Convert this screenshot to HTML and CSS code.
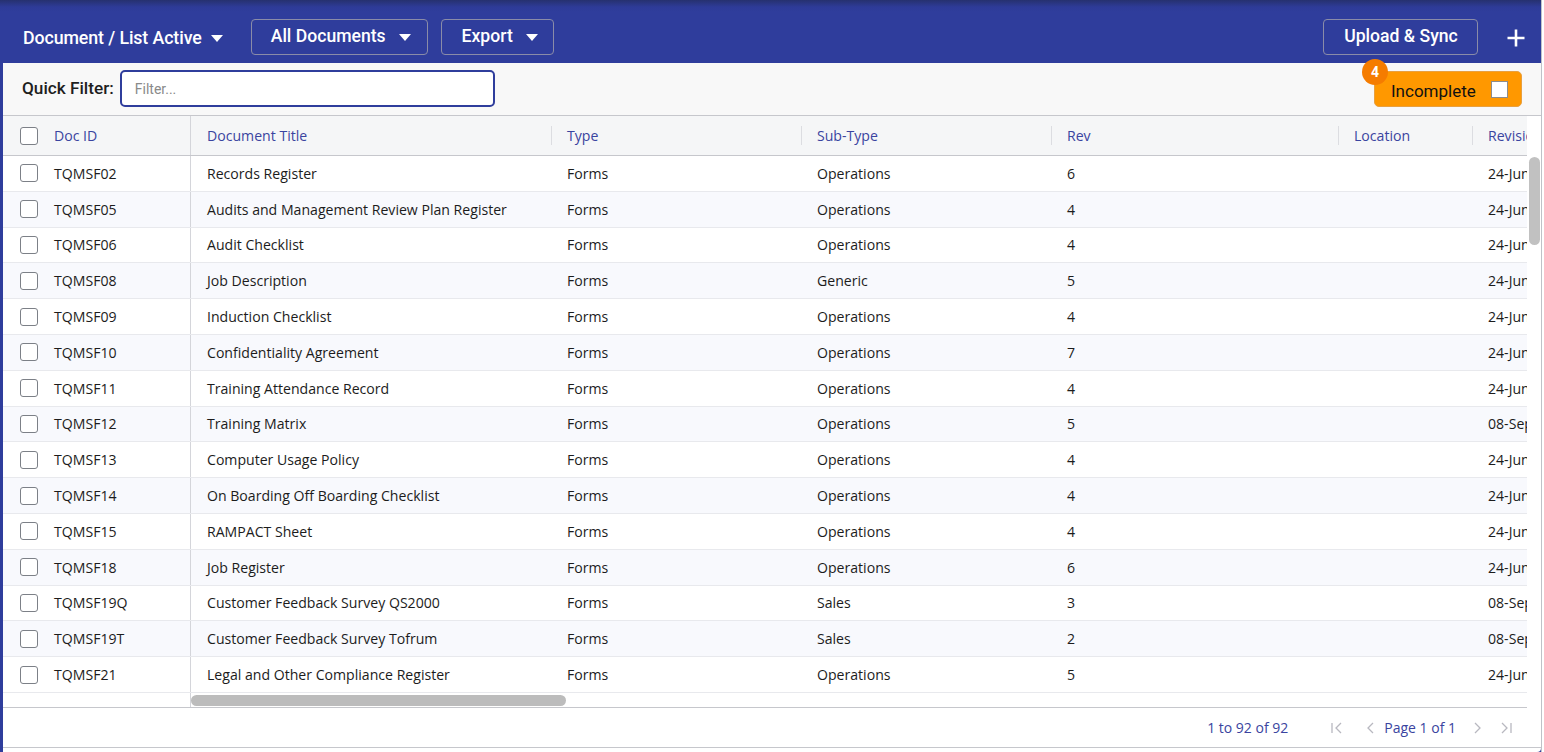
FILE: index.html
```html
<!DOCTYPE html>
<html>
<head>
<meta charset="utf-8">
<link rel="stylesheet" href="styles.css">
</head>
<body>
<div class="app">
  <header class="topbar">
    <div class="title-dd">Document / List Active <span class="caret"></span></div>
    <button class="tb-btn btn-all">All Documents <span class="caret"></span></button>
    <button class="tb-btn btn-export">Export <span class="caret"></span></button>
    <div class="spacer"></div>
    <button class="tb-btn btn-upload">Upload &amp; Sync</button>
    <svg class="plus" width="20" height="20" viewBox="0 0 20 20"><path d="M10 1.5V18.5M1.5 10H18.5" stroke="#fff" stroke-width="2.6"/></svg>
  </header>
  <main class="panel">
    <div class="filterbar">
      <label class="qf-label">Quick Filter:</label>
      <input class="qf-input" type="text" placeholder="Filter...">
      <div class="spacer"></div>
      <div class="incomplete">
        <span class="badge">4</span>
        <span>Incomplete</span>
        <span class="inc-box"></span>
      </div>
    </div>
    <div class="grid">
      <div class="grid-view">
        <div class="row head">
          <div class="cell pin"><span class="cb"></span><span>Doc ID</span></div>
          <div class="cell c-title">Document Title</div>
          <div class="cell c-type sep">Type</div>
          <div class="cell c-sub sep">Sub-Type</div>
          <div class="cell c-rev sep">Rev</div>
          <div class="cell c-loc sep">Location</div>
          <div class="cell c-date sep">Revision Date</div>
        </div>
        <div class="body">
          <div class="row"><div class="cell pin"><span class="cb"></span><span>TQMSF02</span></div><div class="cell c-title">Records Register</div><div class="cell c-type">Forms</div><div class="cell c-sub">Operations</div><div class="cell c-rev">6</div><div class="cell c-loc"></div><div class="cell c-date">24-Jun-2021</div></div>
          <div class="row alt"><div class="cell pin"><span class="cb"></span><span>TQMSF05</span></div><div class="cell c-title">Audits and Management Review Plan Register</div><div class="cell c-type">Forms</div><div class="cell c-sub">Operations</div><div class="cell c-rev">4</div><div class="cell c-loc"></div><div class="cell c-date">24-Jun-2021</div></div>
          <div class="row"><div class="cell pin"><span class="cb"></span><span>TQMSF06</span></div><div class="cell c-title">Audit Checklist</div><div class="cell c-type">Forms</div><div class="cell c-sub">Operations</div><div class="cell c-rev">4</div><div class="cell c-loc"></div><div class="cell c-date">24-Jun-2021</div></div>
          <div class="row alt"><div class="cell pin"><span class="cb"></span><span>TQMSF08</span></div><div class="cell c-title">Job Description</div><div class="cell c-type">Forms</div><div class="cell c-sub">Generic</div><div class="cell c-rev">5</div><div class="cell c-loc"></div><div class="cell c-date">24-Jun-2021</div></div>
          <div class="row"><div class="cell pin"><span class="cb"></span><span>TQMSF09</span></div><div class="cell c-title">Induction Checklist</div><div class="cell c-type">Forms</div><div class="cell c-sub">Operations</div><div class="cell c-rev">4</div><div class="cell c-loc"></div><div class="cell c-date">24-Jun-2021</div></div>
          <div class="row alt"><div class="cell pin"><span class="cb"></span><span>TQMSF10</span></div><div class="cell c-title">Confidentiality Agreement</div><div class="cell c-type">Forms</div><div class="cell c-sub">Operations</div><div class="cell c-rev">7</div><div class="cell c-loc"></div><div class="cell c-date">24-Jun-2021</div></div>
          <div class="row"><div class="cell pin"><span class="cb"></span><span>TQMSF11</span></div><div class="cell c-title">Training Attendance Record</div><div class="cell c-type">Forms</div><div class="cell c-sub">Operations</div><div class="cell c-rev">4</div><div class="cell c-loc"></div><div class="cell c-date">24-Jun-2021</div></div>
          <div class="row alt"><div class="cell pin"><span class="cb"></span><span>TQMSF12</span></div><div class="cell c-title">Training Matrix</div><div class="cell c-type">Forms</div><div class="cell c-sub">Operations</div><div class="cell c-rev">5</div><div class="cell c-loc"></div><div class="cell c-date">08-Sep-2021</div></div>
          <div class="row"><div class="cell pin"><span class="cb"></span><span>TQMSF13</span></div><div class="cell c-title">Computer Usage Policy</div><div class="cell c-type">Forms</div><div class="cell c-sub">Operations</div><div class="cell c-rev">4</div><div class="cell c-loc"></div><div class="cell c-date">24-Jun-2021</div></div>
          <div class="row alt"><div class="cell pin"><span class="cb"></span><span>TQMSF14</span></div><div class="cell c-title">On Boarding Off Boarding Checklist</div><div class="cell c-type">Forms</div><div class="cell c-sub">Operations</div><div class="cell c-rev">4</div><div class="cell c-loc"></div><div class="cell c-date">24-Jun-2021</div></div>
          <div class="row"><div class="cell pin"><span class="cb"></span><span>TQMSF15</span></div><div class="cell c-title">RAMPACT Sheet</div><div class="cell c-type">Forms</div><div class="cell c-sub">Operations</div><div class="cell c-rev">4</div><div class="cell c-loc"></div><div class="cell c-date">24-Jun-2021</div></div>
          <div class="row alt"><div class="cell pin"><span class="cb"></span><span>TQMSF18</span></div><div class="cell c-title">Job Register</div><div class="cell c-type">Forms</div><div class="cell c-sub">Operations</div><div class="cell c-rev">6</div><div class="cell c-loc"></div><div class="cell c-date">24-Jun-2021</div></div>
          <div class="row"><div class="cell pin"><span class="cb"></span><span>TQMSF19Q</span></div><div class="cell c-title">Customer Feedback Survey QS2000</div><div class="cell c-type">Forms</div><div class="cell c-sub">Sales</div><div class="cell c-rev">3</div><div class="cell c-loc"></div><div class="cell c-date">08-Sep-2021</div></div>
          <div class="row alt"><div class="cell pin"><span class="cb"></span><span>TQMSF19T</span></div><div class="cell c-title">Customer Feedback Survey Tofrum</div><div class="cell c-type">Forms</div><div class="cell c-sub">Sales</div><div class="cell c-rev">2</div><div class="cell c-loc"></div><div class="cell c-date">08-Sep-2021</div></div>
          <div class="row"><div class="cell pin"><span class="cb"></span><span>TQMSF21</span></div><div class="cell c-title">Legal and Other Compliance Register</div><div class="cell c-type">Forms</div><div class="cell c-sub">Operations</div><div class="cell c-rev">5</div><div class="cell c-loc"></div><div class="cell c-date">24-Jun-2021</div></div>
        </div>
        <div class="hscroll">
          <div class="hs-pin"></div>
          <div class="hs-track"><div class="hs-thumb"></div></div>
        </div>
      </div>
      <div class="vscroll"><div class="vs-thumb"></div></div>
    </div>
    <footer class="pager">
      <span class="count">1 to 92 of 92</span>
      <span class="pg-icons">
        <svg width="14" height="14" viewBox="0 0 14 14"><path d="M2 2V12M11 2L6 7L11 12" fill="none" stroke="#b8b8c0" stroke-width="1.3"/></svg>
        <svg class="prev" width="14" height="14" viewBox="0 0 14 14"><path d="M9 2L4 7L9 12" fill="none" stroke="#b8b8c0" stroke-width="1.3"/></svg>
        <span class="page">Page 1 of 1</span>
        <svg class="next" width="14" height="14" viewBox="0 0 14 14"><path d="M5 2L10 7L5 12" fill="none" stroke="#b8b8c0" stroke-width="1.3"/></svg>
        <svg width="14" height="14" viewBox="0 0 14 14"><path d="M3 2L8 7L3 12M12 2V12" fill="none" stroke="#b8b8c0" stroke-width="1.3"/></svg>
      </span>
    </footer>
  </main>
</div>
</body>
</html>
```
FILE: styles.css
```css
* { box-sizing: border-box; }
html, body { margin: 0; padding: 0; background: #fff; }
body { font-family: "Open Sans", "Noto Sans", sans-serif; width: 1544px; height: 752px; overflow: hidden; }

.app {
  width: 1542px;
  height: 752px;
  background: #2f3d9c;
  border-right: 1px solid #bfc1c8;
  display: flex;
  flex-direction: column;
}

.topbar {
  height: 63px;
  flex: none;
  display: flex;
  align-items: center;
  padding: 11px 0 0 23px;
  background: linear-gradient(#26316f 0px, #2e3b98 7px, #2f3d9c 12px);
  font-family: Roboto, "Liberation Sans", sans-serif;
  color: #fff;
}
.title-dd { font-size: 17.8px; font-weight: 500; display: flex; align-items: center; margin-right: 28px; letter-spacing: -0.1px; }
.caret {
  display: inline-block;
  width: 0; height: 0;
  border-left: 6px solid transparent;
  border-right: 6px solid transparent;
  border-top: 7px solid #fff;
  margin-left: 9px;
  margin-top: 2px;
}
.tb-btn {
  height: 36px;
  background: transparent;
  border: 1px solid #8a8ca8;
  border-radius: 4px;
  color: #fff;
  font-family: Roboto, "Liberation Sans", sans-serif;
  font-size: 17.6px;
  font-weight: 500;
  display: flex;
  align-items: center;
  justify-content: center;
  padding: 0 0 2px 3px;
}
.tb-btn .caret { margin-left: 13px; }
.btn-all { width: 177px; margin-right: 13px; }
.btn-export { width: 113px; padding-left: 5px; }
.btn-upload { width: 155px; margin-right: 28px; padding-left: 1px; }
.spacer { flex: 1; }
.plus { margin-right: 15px; margin-top: 2px; }

.panel {
  flex: 1;
  margin-left: 3px;
  background: #fff;
  display: flex;
  flex-direction: column;
  padding-bottom: 4px;
  border-bottom-right-radius: 4px;
}

.filterbar {
  height: 52px;
  flex: none;
  background: #f8f8f8;
  display: flex;
  align-items: center;
  padding: 0 20px 0 19px;
}
.qf-label {
  font-family: Roboto, "Liberation Sans", sans-serif;
  font-size: 17.2px;
  font-weight: 500;
  color: #1e1e1e;
  margin-right: 6px;
  margin-bottom: 2px;
}
.qf-input {
  width: 375px;
  height: 37px;
  border: 2px solid #2f3d9c;
  border-radius: 5px;
  background: #fff;
  padding: 0 13px;
  font-family: Roboto, "Liberation Sans", sans-serif;
  font-size: 14px;
  outline: none;
  margin-bottom: 1px;
}
.qf-input::placeholder { color: #8a8a8a; }

.incomplete {
  position: relative;
  width: 148px;
  height: 36px;
  background: #ff9800;
  border: 1px solid #e8a040;
  border-radius: 5px;
  display: flex;
  align-items: center;
  padding: 3px 0 0 16px;
  font-family: Roboto, "Liberation Sans", sans-serif;
  font-size: 17px;
  color: #111;
  margin-right: -1px;
}
.inc-box {
  width: 17px; height: 17px;
  background: #fff;
  border: 1px solid #8c8c8c;
  margin-left: 15px;
  margin-bottom: 2px;
}
.badge {
  position: absolute;
  left: -13px;
  top: -13px;
  width: 26px; height: 26px;
  border-radius: 50%;
  background: #f57c00;
  color: #fff;
  font-weight: 700;
  font-size: 14px;
  display: flex;
  align-items: center;
  justify-content: center;
}

.grid {
  flex: 1;
  display: flex;
  border-top: 1px solid #c6c7cc;
  overflow: hidden;
}
.grid-view { width: 1524px; overflow: hidden; display: flex; flex-direction: column; }

.row {
  display: grid;
  grid-template-columns: 188px 360px 250px 250px 287px 134px 200px;
  height: 35.8px;
  border-bottom: 1px solid #e8e9ed;
  font-size: 14.1px;
  color: #1c1c1c;
  background: #fff;
}
.row.alt { background: #f8f9fd; }
.row.head {
  height: 40px;
  background: #f5f6f7;
  border-bottom: 1px solid #c6c7cc;
  color: #3a44a0;
}
.cell {
  display: flex;
  align-items: center;
  padding-left: 16px;
  white-space: nowrap;
  overflow: hidden;
  position: relative;
}
.cell.pin { padding-left: 17px; border-right: 1px solid #d4d5da; }
.head .cell.sep::before {
  content: "";
  position: absolute;
  left: 0; top: 10px; bottom: 10px;
  width: 1px;
  background: #dcdde1;
}
.cb {
  width: 18px; height: 18px;
  border: 1.5px solid #7c8087;
  border-radius: 3px;
  background: #fff;
  margin-right: 16px;
  flex: none;
}

.hscroll { flex: 1; display: flex; border-bottom: 1px solid #c6c7cc; }
.hs-pin { width: 188px; border-right: 1px solid #d4d5da; }
.hs-track { flex: 1; display: flex; align-items: flex-end; padding-bottom: 1px; }
.hs-thumb { width: 375px; height: 11px; background: #bcbcbc; border-radius: 6px; }

.vscroll {
  flex: 1;
  padding-top: 41px;
  padding-left: 2px;
}
.vs-thumb { width: 11px; height: 88px; background: #c1c1c1; border-radius: 6px; }

.pager {
  height: 40px;
  flex: none;
  display: flex;
  align-items: center;
  justify-content: flex-end;
  padding-right: 23px;
  font-size: 14px;
  color: #3a44a0;
  border-bottom: 1px solid #c6c7cc;
}
.count { margin-right: 37px; }
.pg-icons { display: flex; align-items: center; }
.pg-icons svg { margin: 0 5px; }
.pg-icons .prev { margin-left: 15px; margin-right: 6px; }
.pg-icons .next { margin-left: 14px; margin-right: 10px; }
```
